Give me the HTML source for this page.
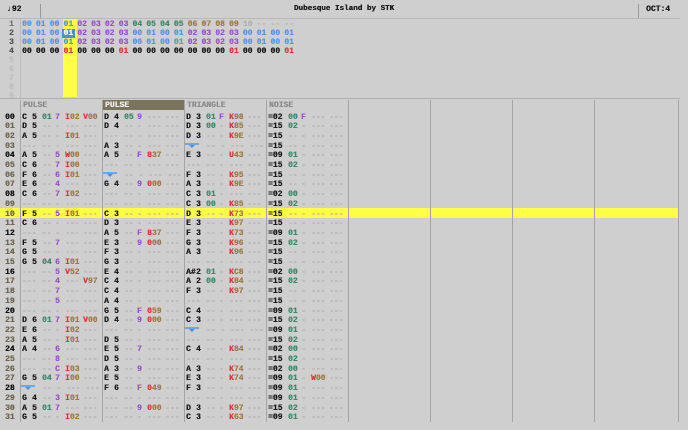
<!DOCTYPE html>
<html><head><meta charset="utf-8">
<style>
*{margin:0;padding:0;box-sizing:border-box}
body{width:688px;height:430px;background:#cfcfcf;overflow:hidden;position:relative;font-family:"Liberation Mono","DejaVu Sans Mono",monospace;font-size:8px;font-weight:bold;color:#1a1a1a}
.a{position:absolute;white-space:pre;line-height:9px;text-shadow:0.3px 0 0 currentColor}
.l{position:absolute;background:#a8a8a8}
.d{color:#ababab}
.g{color:#3f8a6c}.p{color:#9a55c8}.r{color:#d83c3c}.b{color:#a07a45}.bl{color:#5a94e6}.lt{color:#b0b0b0}
.mk{position:absolute;width:14px;height:2px;background:#6aa8ee}
.mk:after{content:"";position:absolute;left:4px;top:2px;border-left:3px solid transparent;border-right:3px solid transparent;border-top:3px solid #4a90e0}
</style></head><body>
<div class="a" style="left:7px;top:5px;font-size:8px">♩92</div>
<div class="l" style="left:40px;top:4px;width:1px;height:14px;background:#999"></div>
<div class="a" style="left:0;width:688px;text-align:center;top:5px;font-size:7.6px">Dubesque Island by STK</div>
<div class="l" style="left:638px;top:4px;width:1px;height:14px;background:#999"></div>
<div class="a" style="left:646px;top:5px">OCT:4</div>
<div class="l" style="left:0;top:18px;width:680px;height:1px;background:#b8b8b8"></div>
<div class="l" style="left:63px;top:19px;width:14px;height:78px;background:#ffff44"></div>
<div class="l" style="left:20px;top:19px;width:1px;height:79px;background:#bcbcbc"></div>
<div class="l" style="left:0;top:98px;width:680px;height:1px;background:#b0b0b0"></div>
<div class="l" style="left:0;top:208px;width:678px;height:10px;background:#ffff44"></div>
<div class="l" style="left:102px;top:100px;width:82px;height:10px;background:#7b735b"></div>
<div id="c"></div>
<script>
var c=document.getElementById('c'),h='';
function t(x,y,s,cl,st){h+='<div class="a'+(cl?' '+cl:'')+'" style="left:'+x+'px;top:'+y+'px;'+(st||'')+'">'+s+'</div>';}
var O=[
"0 1 0 1 2 3 2 3 4 5 4 5 6 7 8 9 10 - - -",
"0 1 0 1 2 3 2 3 0 1 0 1 2 3 2 3 0 1 0 1",
"0 1 0 1 2 3 2 3 0 1 0 1 2 3 2 3 0 1 0 1",
"0 0 0 1 0 0 0 1 0 0 0 0 0 0 0 1 0 0 0 1"];
for(var r=0;r<4;r++){
 t(9,20+r*9,String(r+1),'',r==0?'color:#777':'color:#555');
 var v=O[r].split(' ');
 for(var i=0;i<v.length;i++){
  var x=22+i*13.8,y=20+r*9,s,cl;
  if(v[i]=='-'){s='--';cl='lt';}
  else{var n=+v[i];s=(n<10?'0':'')+n;
   if(r==3)cl=n?'r':'';
   else cl=n<=1?'bl':n<=3?'p':n<=5?'g':n<=9?'b':'lt';}
  if(r==1&&i==3){h+='<div class="l" style="left:'+(x-1)+'px;top:'+(y)+'px;width:13px;height:9px;background:#4a8ee0"></div>';cl='';s='<span style="color:#fff">01</span>';}
  t(x,y,s,cl);
 }
}
for(var r=4;r<9;r++)t(9,20+r*9,String(r+1),'','color:#bdbdbd');
var X=[20,102,184,266,348,430,512,594,678];
for(var i=0;i<9;i++)h+='<div class="l" style="left:'+X[i]+'px;top:100px;width:1px;height:322px;background:#a5a5a5"></div>';
var H=['PULSE','PULSE','TRIANGLE','NOISE'];
for(var i=0;i<4;i++)t(X[i]+3,101,H[i],'',i==1?'color:#eee':'color:#8c8c8c');
var P1=["C5|01|7|I02|V00","D5","A5|||I01","","A5||5|W00","C6||7|I00","F6||6|I01","E6||4","C6||7|I02","","F5||5|I01","C6","","F5||7","G5","G5|04|6|I01","||5|V52","||4||V97","||7","||5","","D6|01|7|I01|V00","E6|||I02","A5|||I01","A4||6","||8","||C|I03","G5|04|7|I00","M","G4||3|I01","A5|01|7","G5|||I02"];
var P2=["D4|05|9","D4","","A3","A5||F|837","","M","G4||9|000","","","C3","D3","A5||F|837","E3||9|000","F3","G3","E4","C4","C4","A4","G5||F|059","D4||9|000","","D5","E5||7","D5","A3||9","E5","F6||F|049","","||9|000",""];
var TR=["D3|01|F|K98","D3|00||K85","D3|||K9E","M","E3|||U43","","F3|||K95","A3|||K9E","C3|01","C3|00||K85","D3|||K73","E3|||K97","F3|||K73","G3|||K96","A3|||K96","","A#2|01||KC8","A2|00||K84","F3|||K97","","C4","C3","M","","C4|||K84","","A3|||K74","E3|||K74","F3","","D3|||K97","C3|||K63"];
var NZ=["02|00|F","15|02","15","15","09|01","15|02","15","15","02|00","15|02","15","15","09|01","15|02","15","15","02|00","15|02","15","15","09|01","15|02","09|01","15|02","02|00","15|02","02|00","09|01||W00","09|01","09|01","15|02","09|01"];
function fx(s){return s?'<span class="r">'+s[0]+'</span><span class="b">'+s.slice(1)+'</span>':'<span class="d">---</span>';}
function cell(x0,y,s,noise){
 if(s=='M'){h+='<div class="mk" style="left:'+(x0+1)+'px;top:'+(y+1)+'px"></div>';
  t(x0+22,y,'-- - --- ---','d');return;}
 var f=s.split('|');
 var n=f[0]||'';
 if(noise&&n){t(x0+2,y,'='+n);}
 else if(n){var o=n.slice(-1),nn=n.slice(0,-1);t(x0+2,y,nn);t(x0+12,y,o);}
 else t(x0+2,y,'--- -','d');
 t(x0+22,y,f[1]||'--',f[1]?'g':'d');
 t(x0+35,y,f[2]||'-',f[2]?'p':'d');
 t(x0+45,y,fx(f[3]));
 t(x0+63,y,fx(f[4]));
}
for(var r=0;r<32;r++){
 var y=112.5+r*9.7;
 t(5,y,(r<10?'0':'')+r,'',r%4==0?'color:#111':'color:#6e6650');
 cell(X[0],y,P1[r]||'');cell(X[1],y,P2[r]||'');cell(X[2],y,TR[r]||'');cell(X[3],y,NZ[r]||'',1);
}
c.innerHTML=h;
</script>
</body></html>
